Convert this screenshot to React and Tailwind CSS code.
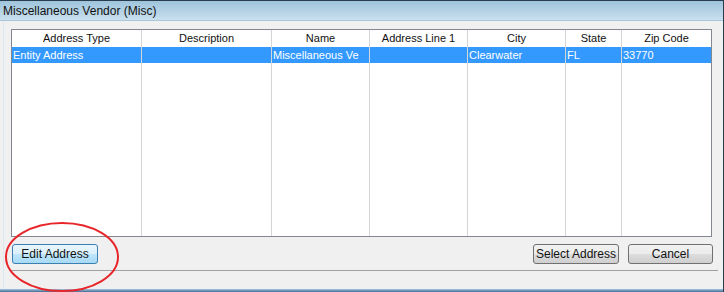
import React from "react";

const cols = [
  { name: "Address Type", w: "w-[130px]", v: "Entity Address" },
  { name: "Description", w: "w-[130px]", v: "" },
  { name: "Name", w: "w-[98px]", v: "Miscellaneous Ve" },
  { name: "Address Line 1", w: "w-[98px]", v: "" },
  { name: "City", w: "w-[98px]", v: "Clearwater" },
  { name: "State", w: "w-[56px]", v: "FL" },
  { name: "Zip Code", w: "w-[89px]", v: "33770", last: true },
];

function Btn({ children, focused, className }) {
  return (
    <div
      className={
        "h-[20px] flex items-center justify-center rounded-[3px] border text-[12px] text-[#111] " +
        (focused
          ? "border-[#3c7fb1] bg-[linear-gradient(#eaf6fd_0%,#d9f0fc_50%,#bee6fd_50%,#a7d9f5_100%)] "
          : "border-[#707070] bg-[linear-gradient(#f2f2f2_0%,#ebebeb_50%,#dddddd_50%,#cfcfcf_100%)] ") +
        className
      }
    >
      {children}
    </div>
  );
}

export default function App() {
  return (
    <div
      className="relative w-[724px] h-[292px] overflow-hidden bg-[#f0f0f0] flex flex-col border-r border-t border-[#2a3d4c]"
      style={{ fontFamily: '"Liberation Sans", Arial, sans-serif' }}
    >
      <div className="h-[20px] shrink-0 flex items-center pl-[3px] text-[12px] text-[#111] bg-[linear-gradient(#9ec4dc,#c9e0ee)] border-b border-[#aac8dc]">
        Miscellaneous Vendor (Misc)
      </div>
      <div className="flex-1 flex flex-col border-l border-[#dfe6ec] ml-[3px] mr-[5px] pl-[7px] bg-[#f0f0f0]">
        <div className="mt-[8px] h-[208px] w-[701px] border border-[#828790] bg-white flex text-[11px]">
          {cols.map((c) => (
            <div
              key={c.name}
              className={
                c.w +
                " shrink-0 flex flex-col " +
                (c.last ? "" : "border-r border-[#d5d5d5]")
              }
            >
              <div className="h-[17px] flex items-center justify-center text-[#111]">
                {c.name}
              </div>
              <div className="h-[16px] flex items-center pl-[1px] bg-[#3399ff] text-white whitespace-nowrap overflow-hidden">
                {c.v}
              </div>
            </div>
          ))}
        </div>
        <div className="mt-[7px] flex items-center h-[20px] w-[702px]">
          <Btn focused className="w-[86px] ml-[1px]">Edit Address</Btn>
          <div className="flex-1" />
          <Btn className="w-[86px]">Select Address</Btn>
          <Btn className="w-[85px] ml-[9px]">Cancel</Btn>
        </div>
        <div className="mt-[6px] border-b border-[#a0a0a0]" />
        <div className="flex-1" />
      </div>
      <div className="h-[3px] shrink-0 bg-[linear-gradient(#a8c6e2,#3f6c94)]" />
      <svg
        className="absolute left-0 top-0 pointer-events-none"
        width="724"
        height="292"
      >
        <ellipse
          cx="62"
          cy="256"
          rx="56"
          ry="34"
          fill="none"
          stroke="#e8262a"
          strokeWidth="2"
        />
      </svg>
    </div>
  );
}
